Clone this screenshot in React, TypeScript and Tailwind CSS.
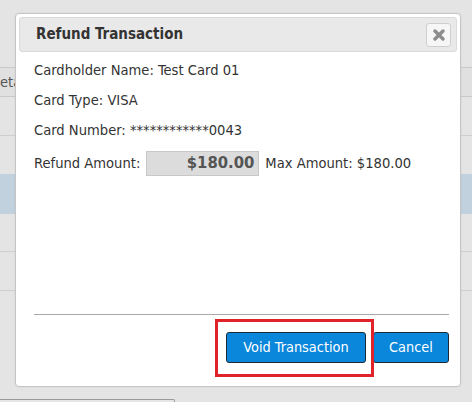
import React from 'react';

// Refund dialog over a table of transactions

const FONT = { fontFamily: '"DejaVu Sans Condensed", "DejaVu Sans", sans-serif' };

const rows = [
  { h: 'h-[39px]', bg: 'bg-[#e4e4e4]', border: true },
  { h: 'h-[38px]', bg: 'bg-[#e4e4e4]', border: false },
  { h: 'h-[40px]', bg: 'bg-[#c1d1de]', border: false },
  { h: 'h-[38px]', bg: 'bg-[#e4e4e4]', border: true },
  { h: 'h-[39px]', bg: 'bg-[#e4e4e4]', border: true },
];

const CloseIcon = () => (
  <svg width="12" height="12" viewBox="0 0 12 12">
    <path d="M2 2 L10 10 M10 2 L2 10" stroke="#8c8c8c" strokeWidth={3.4} strokeLinecap="round" />
  </svg>
);

export default function App() {
  return (
    <div className="relative w-[472px] h-[402px] overflow-hidden bg-[#e4e4e4] text-[14.6px] text-[#333]" style={FONT}>
      {/* table behind the dialog */}
      <div className="flex flex-col">
        <div className="h-[68px] border-b border-[#c9c9c9]" />
        <div className="h-[29px] bg-[#e0e0e0] border-b border-[#c9c9c9] flex items-center text-[#555]">
          <span>eta</span>
        </div>
        {rows.map((r, i) => (
          <div key={i} className={`${r.h} ${r.bg} ${r.border ? 'border-b border-[#cfcfcf]' : ''}`} />
        ))}
        <div className="h-[68px]" />
      </div>
      <div className="absolute left-0 top-[399px] w-[175px] h-[10px] border-t border-r border-[#9a9a9a] rounded-tr-[2px] bg-[#e6e6e6]" />

      {/* dialog */}
      <div className="absolute left-[15px] top-[13px] w-[446px] h-[374px] bg-white border border-[#c5c5c5] rounded-[4px] p-[3px] flex flex-col shadow-[0_0_2px_rgba(0,0,0,0.08)]">
        <div className="h-[35px] bg-[#e9e9e9] border border-[#dadada] rounded-[3px] flex items-center justify-between pl-[16px] pr-[5px]">
          <span className="font-bold text-[15px] text-[#333]">Refund Transaction</span>
          <button className="w-[25px] h-[24px] border border-[#cfcfcf] rounded-[3px] bg-[#f6f6f6] flex items-center justify-center">
            <CloseIcon />
          </button>
        </div>

        <div className="flex-1 flex flex-col px-[15px] pt-[3px]">
          <div className="h-[30px] flex items-center">Cardholder Name: Test Card 01</div>
          <div className="h-[30px] flex items-center">Card Type: VISA</div>
          <div className="h-[30px] flex items-center">Card Number: ************0043</div>
          <div className="mt-[3px] h-[30px] flex items-center">
            <span>Refund Amount:</span>
            <div className="ml-[6px] w-[113px] h-[25px] bg-[#dcdcdc] border border-[#c8c8c8] flex items-center justify-end pr-[4px] font-bold text-[16.5px] text-[#555]">
              $180.00
            </div>
            <span className="ml-[6px]">Max Amount: $180.00</span>
          </div>
        </div>

        <div className="ml-[15px] mr-[8px] border-t border-[#a9a9a9] pt-[17px] pb-[20px] flex justify-end gap-[7px]">
          <button className="relative w-[140px] h-[31px] bg-[#0a86da] text-white border border-[#1b2a36] rounded-[3px] text-[14.4px]">
            Void Transaction
            <span className="absolute -left-[12px] -top-[14px] w-[159px] h-[58px] border-[3px] border-[#e0232a] pointer-events-none" />
          </button>
          <button className="w-[76px] h-[31px] bg-[#0a86da] text-white border border-[#1b2a36] rounded-[3px] text-[14.4px]">
            Cancel
          </button>
        </div>
      </div>
    </div>
  );
}
